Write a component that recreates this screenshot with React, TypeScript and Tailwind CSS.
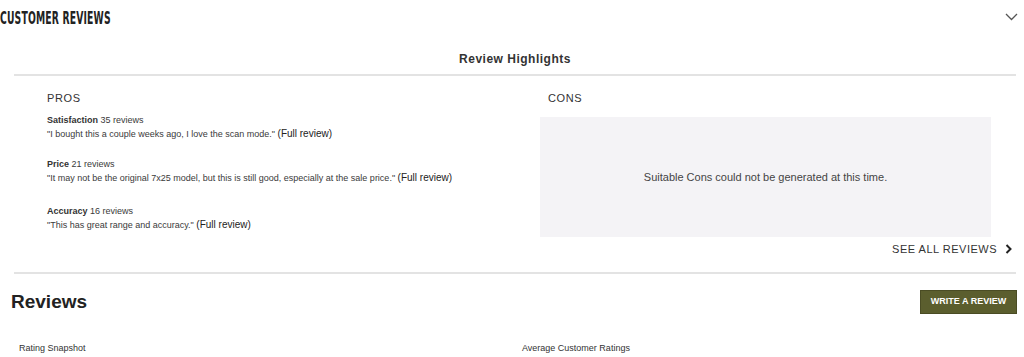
import React from "react";

const sans = { fontFamily: '"Liberation Sans", Arial, sans-serif' };

function Pro({ title, count, quote, className }: { title: string; count: string; quote: string; className?: string }) {
  return (
    <div className={"text-[9px] leading-[13px] text-[#3a3a3a] " + (className ?? "")}>
      <div>
        <span className="font-bold text-[#333]">{title}</span> {count}
      </div>
      <div>
        {quote} <span className="text-[10px] text-[#222]">(Full review)</span>
      </div>
    </div>
  );
}

export default function App() {
  return (
    <div className="w-[1024px] h-[357px] bg-white overflow-hidden" style={sans}>
      <div className="flex items-center justify-between h-[34px] pr-[6px]">
        <div
          className="text-[18px] font-bold text-[#222] tracking-[0.3px] origin-left scale-x-[0.57] whitespace-nowrap"
          style={{ fontFamily: '"DejaVu Sans Condensed", "Liberation Sans Narrow", sans-serif' }}
        >
          CUSTOMER REVIEWS
        </div>
        <svg width="13" height="8" viewBox="0 0 13 8" fill="none" stroke="#555" strokeWidth="1.3">
          <path d="M1 1l5.5 5.5L12 1" />
        </svg>
      </div>
      <div className="mx-[14px] mr-[8px]">
        <div className="text-center text-[12px] font-bold text-[#333] tracking-[0.5px] h-[40px] pt-[18px] leading-[14px]">
          Review Highlights
        </div>
        <div className="h-[2px] bg-[#e3e3e3]" />
        <div className="flex pt-[15px]">
          <div className="w-[526px] pl-[33px]">
            <div className="text-[11px] tracking-[0.6px] text-[#333] leading-[14px]">PROS</div>
            <div className="flex flex-col mt-[9px]">
              <Pro title="Satisfaction" count="35 reviews" quote={'"I bought this a couple weeks ago, I love the scan mode."'} />
              <Pro className="mt-[17px]" title="Price" count="21 reviews" quote={'"It may not be the original 7x25 model, but this is still good, especially at the sale price."'} />
              <Pro className="mt-[20px]" title="Accuracy" count="16 reviews" quote={'"This has great range and accuracy."'} />
            </div>
          </div>
          <div className="flex-1">
            <div className="text-[11px] tracking-[0.6px] text-[#333] leading-[14px] pl-[8px]">CONS</div>
            <div className="mt-[12px] w-[451px] h-[120px] bg-[#f4f3f6] flex items-center justify-center text-[11px] text-[#444]">
              Suitable Cons could not be generated at this time.
            </div>
            <div className="flex items-center justify-end gap-[8px] mt-[6px] mr-[4px] h-[12px]">
              <span className="text-[11px] tracking-[0.5px] text-[#333] font-medium">SEE ALL REVIEWS</span>
              <svg width="7" height="10" viewBox="0 0 7 10" fill="none" stroke="#222" strokeWidth="2">
                <path d="M1.5 1l4 4-4 4" />
              </svg>
            </div>
          </div>
        </div>
        <div className="h-[2px] bg-[#e3e3e3] mt-[17px]" />
      </div>
      <div className="flex items-center justify-between pl-[11px] pr-[7px] mt-[16px]">
        <div className="text-[19px] font-bold text-[#222] leading-[24px]">Reviews</div>
        <div className="bg-[#5b5e2e] border border-[#4a4c24] text-white text-[9px] font-bold w-[97px] h-[24px] flex items-center justify-center">
          WRITE A REVIEW
        </div>
      </div>
      <div className="flex mt-[28px] text-[9px] text-[#333]">
        <div className="w-[522px] pl-[19px]">Rating Snapshot</div>
        <div>Average Customer Ratings</div>
      </div>
    </div>
  );
}
